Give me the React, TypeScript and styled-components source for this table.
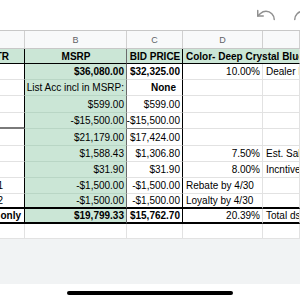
import styled, { createGlobalStyle } from "styled-components";
import { Undo, Redo } from "lucide-react";

const GlobalStyle = createGlobalStyle`
  html, body {
    margin: 0;
    padding: 0;
    background: #fff;
    overflow: hidden;
  }
  body {
    font-family: "Liberation Sans", Arial, sans-serif;
  }
`;

const Screen = styled.div`
  width: 300px;
  height: 300px;
  display: flex;
  flex-direction: column;
  overflow: hidden;
  background: #fff;
`;

const TopBar = styled.div`
  height: 30px;
  flex-shrink: 0;
  display: flex;
  justify-content: flex-end;
  align-items: flex-start;
  gap: 15px;
  padding-top: 4px;
  box-sizing: border-box;
  margin-right: -14px;
  color: #8f8f8f;
`;

const Sheet = styled.div`
  flex-shrink: 0;
  overflow: hidden;
  border-top: 1px solid #c8c8c8;
  box-sizing: border-box;
`;

const COLS = "25px 102px 56px 80px 37px";

const LetterRow = styled.div`
  display: grid;
  grid-template-columns: ${COLS};
  height: 17px;
  background: #f8f9fa;
  border-bottom: 1px solid #c8c8c8;
`;

const Letter = styled.div`
  display: flex;
  align-items: center;
  justify-content: center;
  font-size: 9px;
  color: #5f6368;
  border-right: 1px solid #d0d0d0;
`;

type Rule = "light" | "mid" | "black" | "heavy";

const Row = styled.div<{ $h: number; $rule: Rule; $plain?: boolean }>`
  display: grid;
  grid-template-columns: ${COLS};
  height: ${(p) => p.$h}px;

  & > div {
    border-right: 1px solid #e2e2e2;
    border-bottom: 1px solid #e2e2e2;
  }
  & > div:nth-child(2) {
    border-bottom-color: ${(p) => (p.$plain ? "#e2e2e2" : "#b9d6c5")};
  }
  ${(p) =>
    !p.$plain &&
    `
    & > div:nth-child(1) { border-right-color: #000; }
    & > div:nth-child(2) { border-right-color: #6b6b6b; }
    & > div:nth-child(3) { border-right-color: #000; }
  `}
  ${(p) =>
    p.$rule === "mid" &&
    `
    & > div:nth-child(1) { border-bottom: 2px solid #7a7a7a; }
    & > div:nth-child(3) { border-bottom: 1px solid #8a8a8a; }
  `}
  ${(p) =>
    p.$rule === "black" &&
    `
    & > div { border-bottom: 1px solid #000 !important; }
  `}
  ${(p) =>
    p.$rule === "heavy" &&
    `
    & > div { border-bottom: 2px solid #000 !important; }
  `}
`;

const Cell = styled.div<{
  $align?: "left" | "center" | "right";
  $bold?: boolean;
  $green?: boolean;
  $pr?: number;
  $span?: number;
}>`
  display: flex;
  align-items: center;
  justify-content: ${(p) =>
    p.$align === "right" ? "flex-end" : p.$align === "center" ? "center" : "flex-start"};
  box-sizing: border-box;
  padding: 0 ${(p) => p.$pr ?? 2}px 0 3px;
  font-size: 10px;
  font-weight: ${(p) => (p.$bold ? 700 : 400)};
  color: #000;
  white-space: nowrap;
  overflow: hidden;
  background: ${(p) => (p.$green ? "#cbe6d6" : "#fff")};
  grid-column: span ${(p) => p.$span ?? 1};
`;

const Footer = styled.div`
  flex: 1;
  display: flex;
  flex-direction: column;
`;

const Tray = styled.div`
  height: 45px;
  background: #f1f3f4;
`;

const HomeArea = styled.div`
  flex: 1;
  display: flex;
  justify-content: center;
  padding-top: 7px;
`;

const HomeBar = styled.div`
  width: 166px;
  height: 4px;
  border-radius: 2px;
  background: #000;
`;

type Data = {
  h: number;
  rule: Rule;
  a?: string;
  aPr?: number;
  aBold?: boolean;
  b: string;
  c: string;
  d?: string;
  dLeft?: boolean;
  e?: string;
  bold?: boolean;
  cPr?: number;
};

const rows: Data[] = [
  { h: 16, rule: "light", b: "$36,080.00", c: "$32,325.00", d: "10.00%", e: "Dealer Invoice", bold: true },
  { h: 16, rule: "light", b: "List Acc incl in MSRP:", c: "None", cPr: 6 },
  { h: 17, rule: "light", b: "$599.00", c: "$599.00" },
  { h: 16, rule: "mid", b: "-$15,500.00", c: "-$15,500.00" },
  { h: 17, rule: "light", b: "$21,179.00", c: "$17,424.00" },
  { h: 16, rule: "light", b: "$1,588.43", c: "$1,306.80", d: "7.50%", e: "Est. Sales Tax" },
  { h: 16, rule: "light", b: "$31.90", c: "$31.90", d: "8.00%", e: "Incntive" },
  { h: 16, rule: "light", a: "Rebate 1", aPr: 21, b: "-$1,500.00", c: "-$1,500.00", d: "Rebate by 4/30", dLeft: true },
  { h: 15, rule: "heavy", a: "Rebate 2", aPr: 21, b: "-$1,500.00", c: "-$1,500.00", d: "Loyalty by 4/30", dLeft: true },
  { h: 15, rule: "heavy", a: "Price only", aPr: 3, aBold: true, b: "$19,799.33", c: "$15,762.70", d: "20.39%", e: "Total dsct", bold: true },
];

export default function App() {
  return (
    <Screen>
      <GlobalStyle />
      <TopBar>
        <Undo size={22} strokeWidth={1.6} />
        <Redo size={22} strokeWidth={1.6} />
      </TopBar>
      <Sheet>
        <LetterRow>
          <Letter />
          <Letter>B</Letter>
          <Letter>C</Letter>
          <Letter>D</Letter>
          <Letter />
        </LetterRow>
        <Row $h={15} $rule="black">
          <Cell $green $bold $align="right" $pr={15}>MSRP CTR</Cell>
          <Cell $green $bold $align="center">MSRP</Cell>
          <Cell $green $bold $align="center">BID PRICE</Cell>
          <Cell $green $bold $span={2}>Color- Deep Crystal Blue</Cell>
        </Row>
        {rows.map((r, i) => (
          <Row key={i} $h={r.h} $rule={r.rule}>
            <Cell $align="right" $pr={r.aPr} $bold={r.aBold}>{r.a}</Cell>
            <Cell $green $align="right" $bold={r.bold}>{r.b}</Cell>
            <Cell $align="right" $bold={r.bold || r.c === "None"} $pr={r.cPr}>{r.c}</Cell>
            <Cell $align={r.dLeft ? "left" : "right"}>{r.d}</Cell>
            <Cell>{r.e}</Cell>
          </Row>
        ))}
        <Row $h={15} $rule="light" $plain>
          <Cell />
          <Cell />
          <Cell />
          <Cell />
          <Cell />
        </Row>
      </Sheet>
      <Footer>
        <Tray />
        <HomeArea>
          <HomeBar />
        </HomeArea>
      </Footer>
    </Screen>
  );
}
